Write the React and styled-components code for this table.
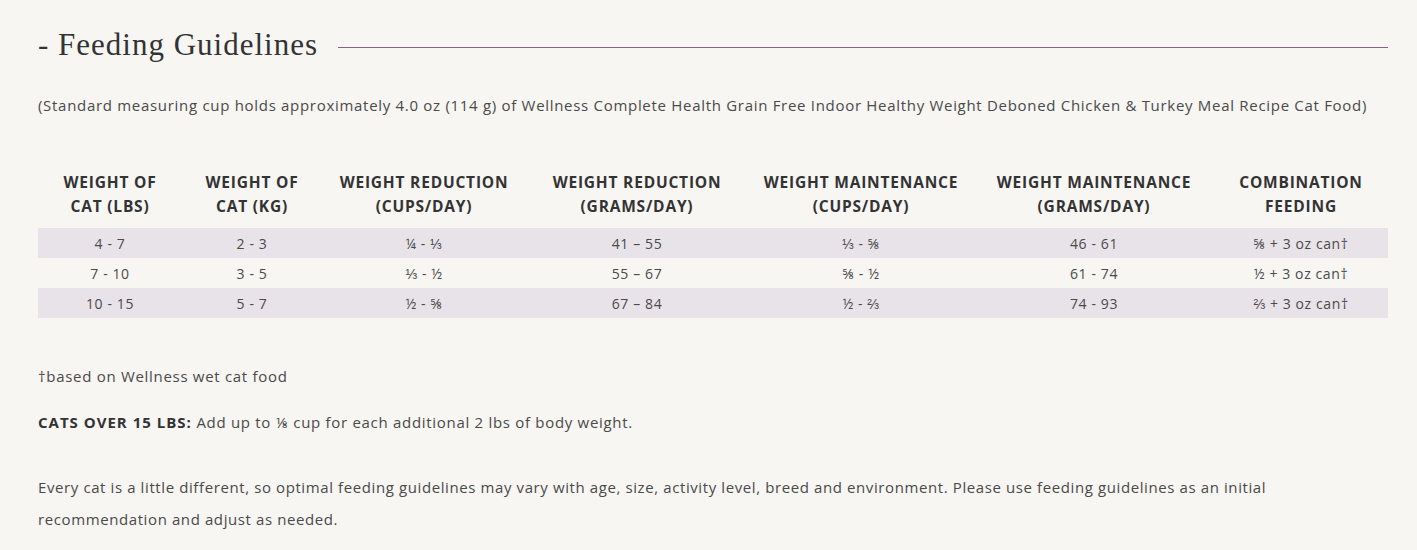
import React from "react";
import styled, { createGlobalStyle } from "styled-components";

const Global = createGlobalStyle`
  html, body { margin: 0; padding: 0; background: #f7f6f3; }
  body { font-family: "Open Sans", "Liberation Sans", sans-serif; color: #4a4a4a; }
`;

const Page = styled.div`
  padding: 27px 29px 0 38px;
`;

const TitleRow = styled.div`
  display: flex;
  align-items: center;
  gap: 20px;
  height: 36px;
`;

const Title = styled.h2`
  margin: 0;
  font-family: "Liberation Serif", "DejaVu Serif", serif;
  font-weight: 400;
  font-size: 31px;
  color: #333;
  white-space: nowrap;
  letter-spacing: 1px;
`;

const Rule = styled.div`
  flex: 1;
  height: 1px;
  background: #846389;
  margin-top: 4px;
`;

const Text = styled.p`
  margin: ${(p) => p.$m || "0"};
  font-size: 15px;
  letter-spacing: ${(p) => p.$ls || "0.7px"};
  line-height: ${(p) => p.$lh || "24px"};
  color: #4a4a4a;
`;

const Strong = styled.strong`
  font-weight: 700;
  letter-spacing: 1px;
  color: #333;
`;

const Table = styled.table`
  width: 1350px;
  border-collapse: collapse;
  table-layout: fixed;
  margin-top: 53px;
`;

const Th = styled.th`
  font-size: 15.5px;
  font-weight: 700;
  letter-spacing: 0.8px;
  line-height: 24px;
  color: #333;
  text-transform: uppercase;
  text-align: center;
  padding: 0 0 10px;
  vertical-align: bottom;
`;

const Tr = styled.tr`
  background: ${(p) => (p.$striped ? "#e8e3e9" : "transparent")};
`;

const Td = styled.td`
  height: 30px;
  padding: 0;
  font-size: 14px;
  letter-spacing: 0.6px;
  text-align: center;
  color: #4a4a4a;
`;

const widths = [144, 140, 204, 222, 226, 240, 174];

const headers = [
  ["Weight of", "Cat (lbs)"],
  ["Weight of", "Cat (kg)"],
  ["Weight Reduction", "(cups/day)"],
  ["Weight Reduction", "(grams/day)"],
  ["Weight Maintenance", "(cups/day)"],
  ["Weight Maintenance", "(grams/day)"],
  ["Combination", "Feeding"],
];

const rows = [
  ["4 - 7", "2 - 3", "¼ - ⅓", "41 – 55", "⅓ - ⅝", "46 - 61", "⅝ + 3 oz can†"],
  ["7 - 10", "3 - 5", "⅓ - ½", "55 – 67", "⅝ - ½", "61 - 74", "½ + 3 oz can†"],
  ["10 - 15", "5 - 7", "½ - ⅝", "67 – 84", "½ - ⅔", "74 - 93", "⅔ + 3 oz can†"],
];

export default function App() {
  return (
    <>
      <Global />
      <Page>
        <TitleRow>
          <Title>- Feeding Guidelines</Title>
          <Rule />
        </TitleRow>
        <Text $m="30px 0 0">
          (Standard measuring cup holds approximately 4.0 oz (114 g) of Wellness Complete Health Grain Free Indoor
          Healthy Weight Deboned Chicken &amp; Turkey Meal Recipe Cat Food)
        </Text>
        <Table>
          <colgroup>
            {widths.map((w, i) => (
              <col key={i} style={{ width: w }} />
            ))}
          </colgroup>
          <thead>
            <tr>
              {headers.map((h, i) => (
                <Th key={i}>
                  {h[0]}
                  <br />
                  {h[1]}
                </Th>
              ))}
            </tr>
          </thead>
          <tbody>
            {rows.map((r, i) => (
              <Tr key={i} $striped={i % 2 === 0}>
                {r.map((c, j) => (
                  <Td key={j}>{c}</Td>
                ))}
              </Tr>
            ))}
          </tbody>
        </Table>
        <Text $m="46px 0 0">†based on Wellness wet cat food</Text>
        <Text $m="22px 0 0">
          <Strong>CATS OVER 15 LBS:</Strong> Add up to ⅛ cup for each additional 2 lbs of body weight.
        </Text>
        <Text $m="37px 0 0" $lh="32px" $ls="0.6px">
          Every cat is a little different, so optimal feeding guidelines may vary with age, size, activity level, breed
          and environment. Please use feeding guidelines as an initial
          <br />
          recommendation and adjust as needed.
        </Text>
      </Page>
    </>
  );
}
